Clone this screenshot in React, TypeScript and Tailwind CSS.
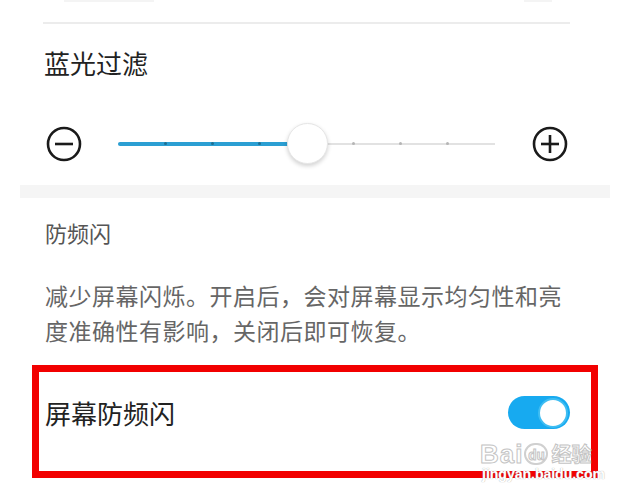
import React from 'react';

const ticks = [1, 2, 3, 5, 6, 7];

const CircleIcon = ({ plus }: { plus?: boolean }) => (
  <svg width="36" height="36" viewBox="0 0 36 36" fill="none" stroke="#1a1a1a" strokeWidth="2.6">
    <circle cx="18" cy="18" r="16" />
    <line x1="9" y1="18" x2="27" y2="18" />
    {plus && <line x1="18" y1="9" x2="18" y2="27" />}
  </svg>
);

// 8 steps across the track, thumb sits on step 4
const BrightnessSlider = () => (
  <div className="relative h-[42px] w-[377px]">
    <div className="absolute left-0 right-0 top-[20px] h-[2px] bg-[#e2e2e2]" />
    <div className="absolute left-0 top-[19px] h-[4px] w-[189px] rounded-full bg-[#2b9fd3]" />
    {ticks.map((t) => (
      <div
        key={t}
        className={`absolute top-[19px] h-[3px] w-[3px] rounded-full ${t < 4 ? 'bg-[#1d6f93]' : 'bg-[#b5b5b5]'}`}
        style={{ left: t * 47.1 - 1.5 }}
      />
    ))}
    <div className="absolute left-[169px] top-0 h-[41px] w-[41px] rounded-full border border-[#e6e6e6] bg-white shadow-[0_2px_4px_rgba(0,0,0,0.18)]" />
  </div>
);

export default function App() {
  return (
    <div
      className="relative h-[498px] w-[627px] overflow-hidden bg-white"
      style={{ fontFamily: '"Noto Sans CJK SC", "Noto Sans", sans-serif' }}
    >
      {/* tail of the row above */}
      <div className="flex h-[3px] items-start">
        <div className="ml-[64px] h-[2px] w-[90px] bg-[#f4f4f4]" />
        <div className="ml-[370px] h-[2px] w-[28px] bg-[#f4f4f4]" />
      </div>
      <div className="ml-[43px] mt-[19px] h-[2px] w-[527px] bg-[#ececec]" />

      <div className="ml-[44px] mt-[26px] text-[26px] leading-[26px] text-[#222]">蓝光过滤</div>

      <div className="mt-[47px] flex items-center">
        <div className="ml-[46px]">
          <CircleIcon />
        </div>
        <div className="ml-[36px]">
          <BrightnessSlider />
        </div>
        <div className="ml-[37px]">
          <CircleIcon plus />
        </div>
      </div>

      <div className="ml-[20px] mt-[20px] h-[13px] w-[590px] bg-[#f5f5f5]" />

      <div className="ml-[45px] mt-[23px] text-[22px] leading-[22px] text-[#555]">防频闪</div>

      <p className="ml-[45px] mt-[35px] w-[560px] text-[23px] leading-[35px] tracking-[0.5px] text-[#666]">
        减少屏幕闪烁。开启后，会对屏幕显示均匀性和亮
        <br />
        度准确性有影响，关闭后即可恢复。
      </p>

      <div className="ml-[32px] mt-[17px] flex h-[113px] w-[566px] items-start justify-between border-[7px] border-[#f20000] pl-[6px] pr-[21px] pt-[24px]">
        <span className="mt-[4px] text-[26px] leading-[26px] text-[#222]">屏幕防频闪</span>
        <div className="flex h-[33px] w-[62px] items-center justify-end rounded-full bg-[#17aaf0] pr-[2px]">
          <div className="h-[30px] w-[30px] rounded-full border-2 border-[#3fbdf2] bg-white" />
        </div>
      </div>

      {/* watermark */}
      <div className="absolute left-[480px] top-[441px] flex items-center text-transparent [-webkit-text-stroke:1px_#c4c4c4]">
        <span className="text-[26px] font-bold leading-[26px] tracking-[1px]" style={{ fontFamily: '"Liberation Sans", sans-serif' }}>
          Bai
        </span>
        <span className="ml-[1px] flex h-[22px] w-[24px] items-center justify-center rounded-full border-2 border-[#d0d0d0] text-[13px] font-bold leading-none">
          du
        </span>
        <span className="ml-[3px] text-[20px] font-bold leading-[20px]">经验</span>
      </div>
      <div
        className="absolute left-[482px] top-[467px] text-[14px] font-bold leading-[14px] text-white [text-shadow:0_0_1px_#999]"
        style={{ fontFamily: '"Liberation Sans", sans-serif' }}
      >
        jingyan.baidu.com
      </div>
    </div>
  );
}
